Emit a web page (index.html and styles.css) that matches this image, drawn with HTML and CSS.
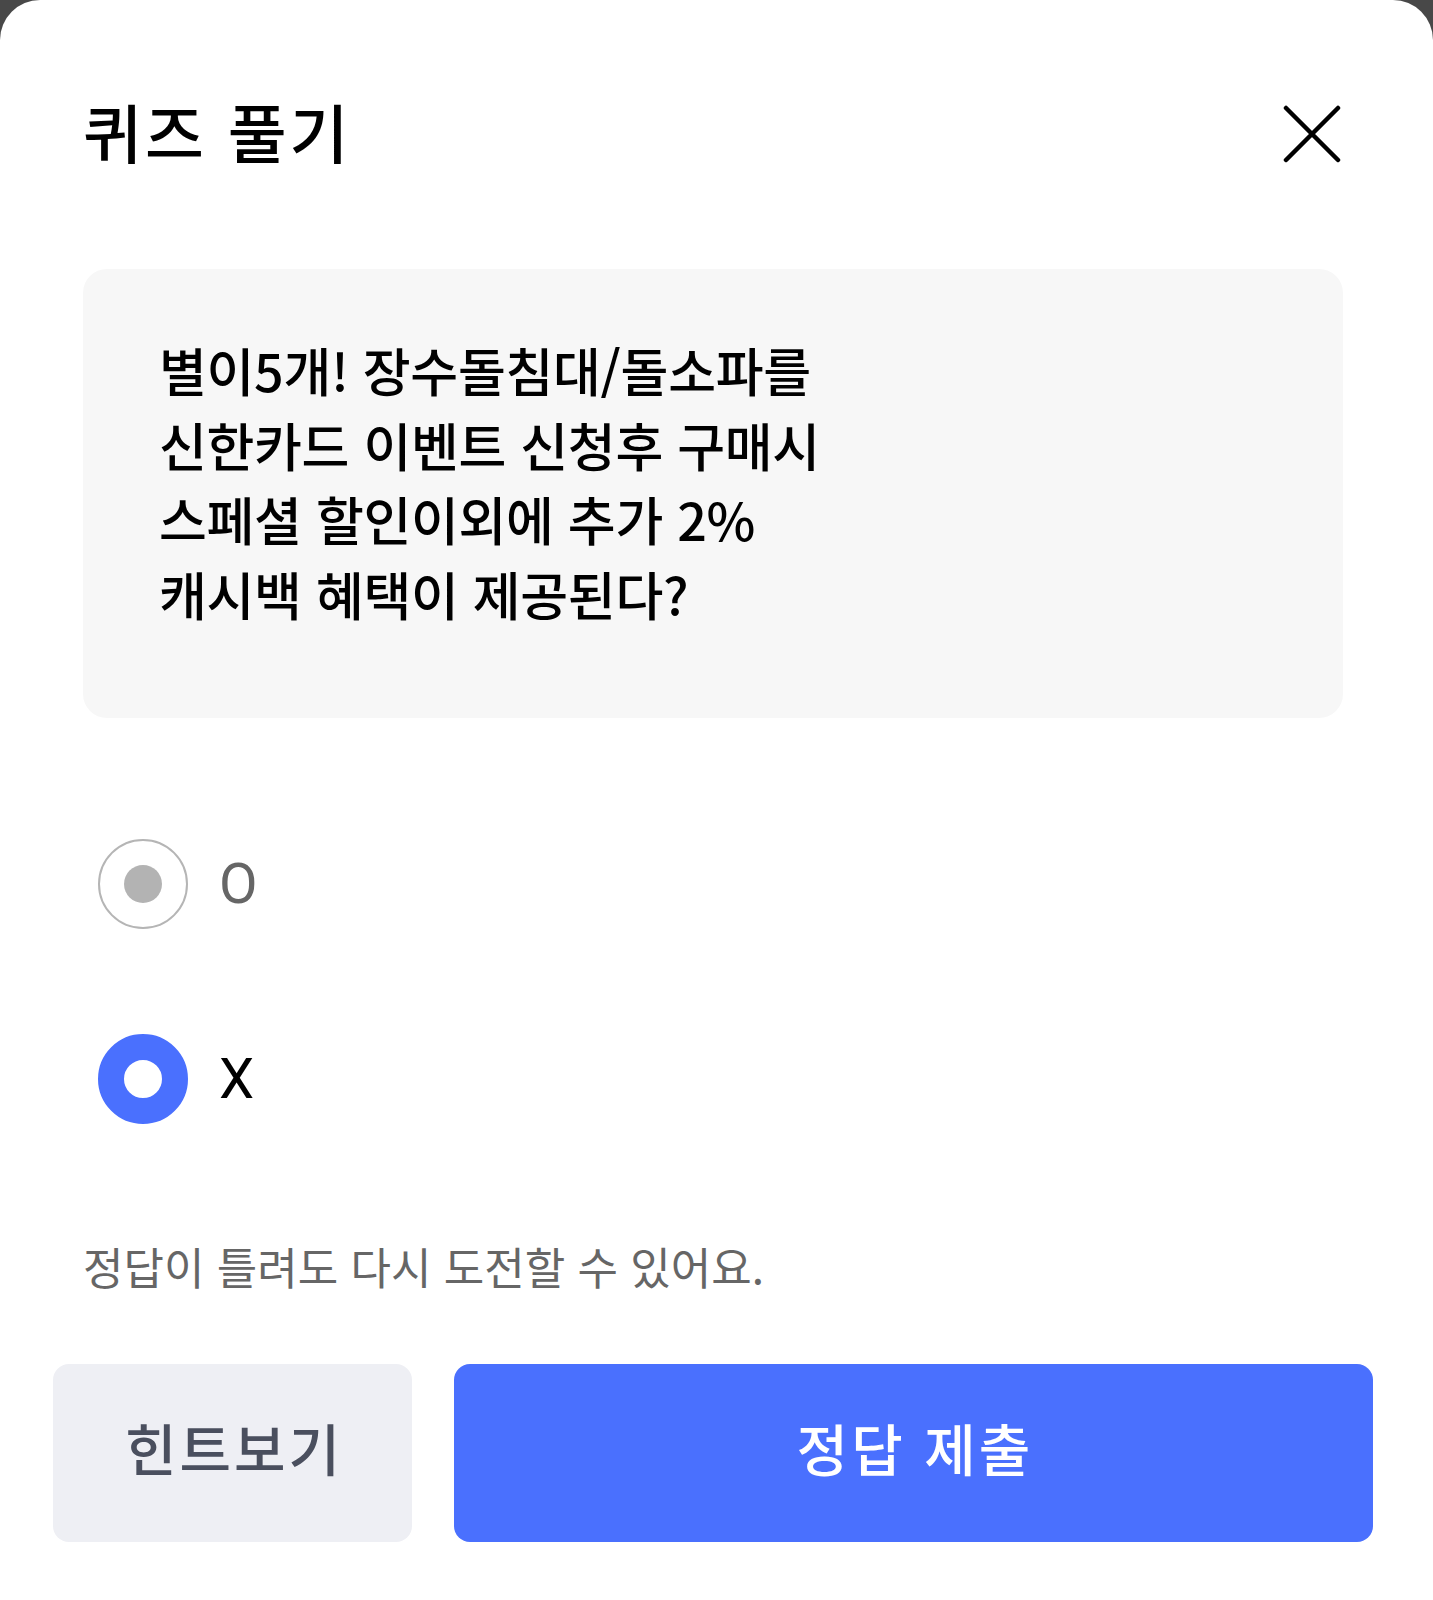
FILE: index.html
```html
<!DOCTYPE html>
<html lang="ko">
<head>
<meta charset="utf-8">
<title>퀴즈 풀기</title>
<link rel="stylesheet" href="styles.css">
</head>
<body>
<div class="sheet">
  <header class="header">
    <h1 class="title">퀴즈 풀기</h1>
    <button class="close" aria-label="닫기">
      <svg width="58" height="58" viewBox="0 0 58 58"><path d="M3 3 L55 55 M55 3 L3 55" stroke="#000" stroke-width="4.5" stroke-linecap="round" fill="none"/></svg>
    </button>
  </header>
  <div class="question">
    <p class="question-text">별이5개! 장수돌침대/돌소파를<br>신한카드 이벤트 신청후 구매시<br>스페셜 할인이외에 추가 2%<br>캐시백 혜택이 제공된다?</p>
  </div>
  <div class="options">
    <label class="option">
      <span class="radio radio-disabled"><span class="dot"></span></span>
      <span class="option-label label-o">O</span>
    </label>
    <label class="option">
      <span class="radio radio-checked"></span>
      <span class="option-label label-x">X</span>
    </label>
  </div>
  <p class="notice">정답이 틀려도 다시 도전할 수 있어요.</p>
  <div class="actions">
    <button class="btn btn-hint">힌트보기</button>
    <button class="btn btn-submit">정답 제출</button>
  </div>
</div>
</body>
</html>
```
FILE: styles.css
```css
html, body {
  margin: 0;
  padding: 0;
  background: #484848;
}
body {
  font-family: "Noto Sans CJK KR", "Noto Sans", sans-serif;
}
.sheet {
  background: #ffffff;
  border-radius: 40px 40px 0 0;
  min-height: 1600px;
  box-sizing: border-box;
  padding: 84px 90px 0 83px;
}
.header {
  display: flex;
  justify-content: space-between;
  align-items: center;
  height: 100px;
}
.title {
  margin: -8px 0 0 0;
  font-size: 64px;
  font-weight: 500;
  color: #000;
  letter-spacing: 3px;
  line-height: 100px;
}
.close {
  border: 0;
  background: none;
  padding: 0;
  width: 58px;
  height: 58px;
  margin-right: 2px;
  display: flex;
}
.question {
  margin-top: 85px;
  height: 449px;
  box-sizing: border-box;
  background: #f7f7f7;
  border-radius: 24px;
  padding: 64px 40px 0 76px;
}
.question-text {
  margin: 0;
  font-size: 52px;
  line-height: 74.5px;
  font-weight: 500;
  letter-spacing: -0.3px;
  color: #000;
}
.options {
  display: flex;
  flex-direction: column;
  gap: 105px;
  margin-top: 121px;
  padding-left: 15px;
}
.option {
  display: flex;
  align-items: center;
  gap: 31px;
  height: 90px;
}
.radio {
  width: 90px;
  height: 90px;
  box-sizing: border-box;
  border-radius: 50%;
  display: flex;
  align-items: center;
  justify-content: center;
  flex: none;
}
.radio-disabled {
  border: 2px solid #b5b5b5;
  background: #fff;
}
.dot {
  width: 38px;
  height: 38px;
  border-radius: 50%;
  background: #b3b3b3;
}
.radio-checked {
  border: 26px solid #4a70fe;
  background: #fff;
}
.option-label {
  font-family: Roboto, "Noto Sans", sans-serif;
  font-size: 56px;
  line-height: 1;
}
.label-o { color: #666666; }
.label-x { color: #000; }
.notice {
  margin: 112px 0 0 0;
  font-size: 44px;
  line-height: 60px;
  color: #666666;
  letter-spacing: 0;
  font-weight: 400;
}
.actions {
  display: flex;
  gap: 42px;
  margin: 68px -30px 0 -30px;
}
.btn {
  height: 178px;
  border: 0;
  border-radius: 16px;
  padding: 0 0 14px 3px;
  font-family: "Noto Sans CJK KR", "Noto Sans", sans-serif;
  font-size: 56px;
  font-weight: 500;
  letter-spacing: 3px;
}
.btn-hint {
  width: 359px;
  background: #eeeff4;
  color: #4a4f5e;
  flex: none;
}
.btn-submit {
  flex: 1;
  background: #4a70fe;
  color: #ffffff;
}
```
